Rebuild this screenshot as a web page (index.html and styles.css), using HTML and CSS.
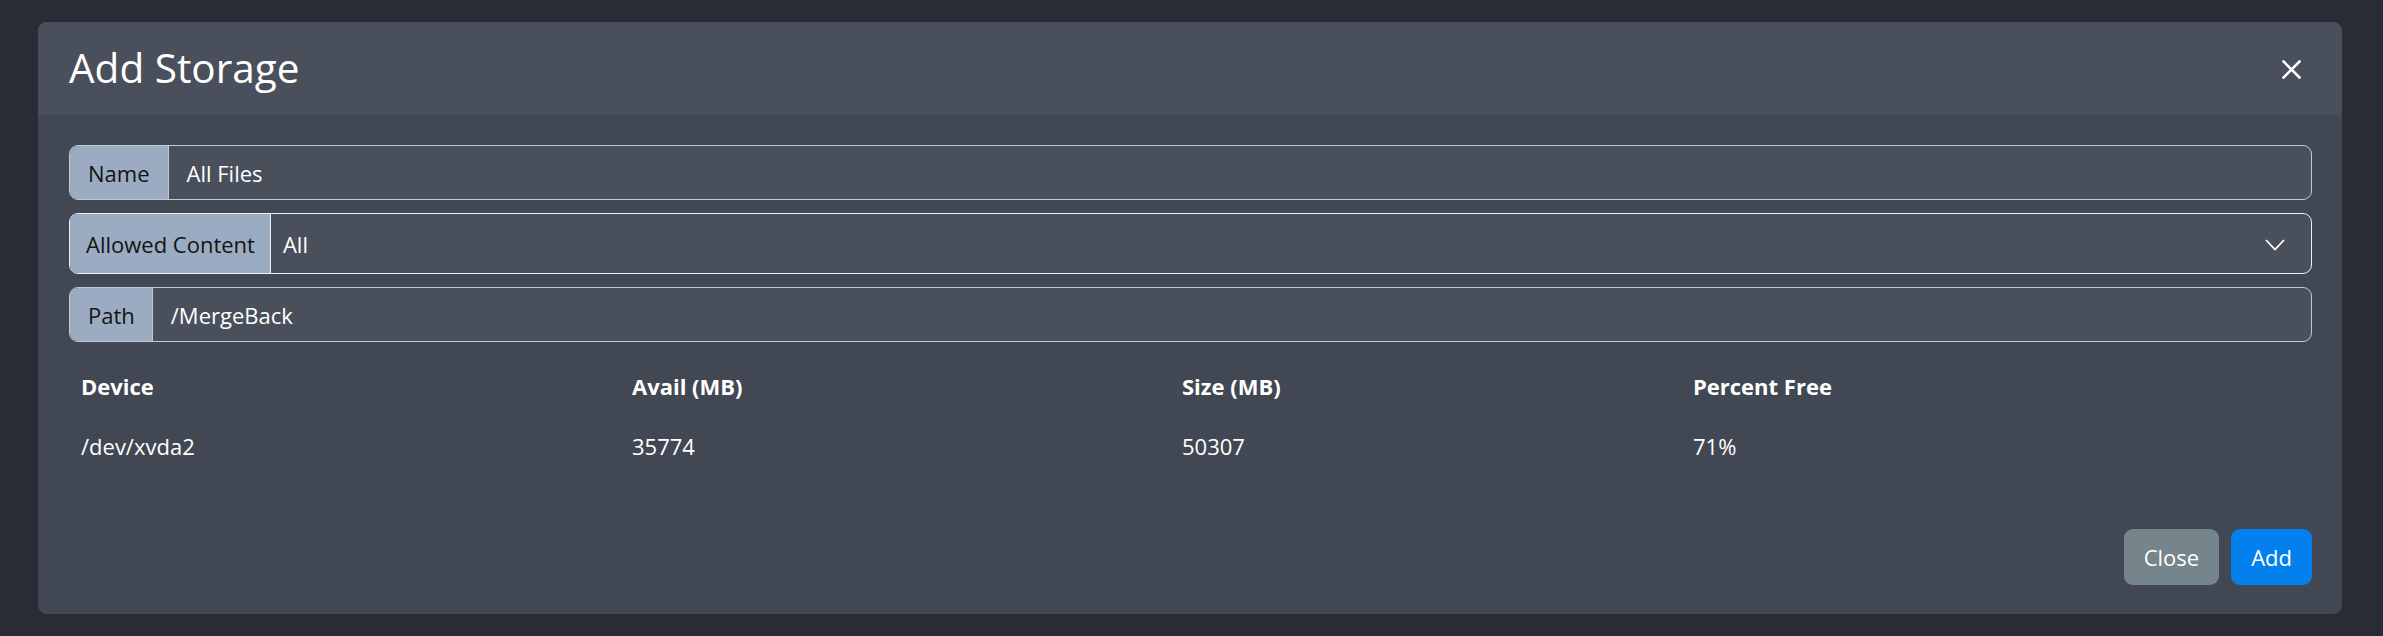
FILE: index.html
```html
<!DOCTYPE html>
<html lang="en">
<head>
<meta charset="utf-8">
<title>Add Storage</title>
<link rel="stylesheet" href="styles.css">
</head>
<body>
<div class="modal">
  <div class="modal-header">
    <h4 class="modal-title">Add Storage</h4>
    <button class="btn-close" aria-label="Close">
      <svg width="19" height="19" viewBox="0 0 19 19"><path d="M1.5 1.5 L17.5 17.5 M17.5 1.5 L1.5 17.5" stroke="#fff" stroke-width="2.6" stroke-linecap="square" fill="none"/></svg>
    </button>
  </div>
  <div class="modal-body">
    <div class="input-group">
      <span class="group-label label-name">Name</span>
      <span class="group-value value-name">All Files</span>
    </div>
    <div class="input-group select-group">
      <span class="group-label label-content">Allowed Content</span>
      <span class="group-value value-content">All</span>
      <svg class="chevron" width="20" height="12" viewBox="0 0 20 12"><path d="M1 1 L10 10.5 L19 1" stroke="#fff" stroke-width="1.8" fill="none"/></svg>
    </div>
    <div class="input-group">
      <span class="group-label label-path">Path</span>
      <span class="group-value value-path">/MergeBack</span>
    </div>
    <div class="table">
      <div class="row head">
        <div class="cell">Device</div>
        <div class="cell">Avail (MB)</div>
        <div class="cell">Size (MB)</div>
        <div class="cell">Percent Free</div>
      </div>
      <div class="row">
        <div class="cell">/dev/xvda2</div>
        <div class="cell">35774</div>
        <div class="cell">50307</div>
        <div class="cell">71%</div>
      </div>
    </div>
  </div>
  <div class="modal-footer">
    <button class="btn btn-secondary">Close</button>
    <button class="btn btn-primary">Add</button>
  </div>
</div>
</body>
</html>
```
FILE: styles.css
```css
* { box-sizing: border-box; }
html, body { margin: 0; padding: 0; }
body {
  background: #292c34;
  font-family: "Open Sans", "Noto Sans", sans-serif;
  font-size: 22px;
  color: #fff;
  padding: 22px 41px 0 38px;
  height: 636px;
  overflow: hidden;
}
.modal {
  width: 2304px;
  height: 592px;
  background: #414853;
  border-radius: 9px;
  overflow: hidden;
  display: flex;
  flex-direction: column;
}
.modal-header {
  height: 93px;
  flex: none;
  background: #4a505b;
  display: flex;
  align-items: center;
  justify-content: space-between;
  padding: 0 41px 0 31px;
}
.modal-title {
  margin: 0;
  font-weight: 400;
  font-size: 40.5px;
  line-height: 1;
  color: #fff;
}
.btn-close {
  border: 0;
  background: none;
  padding: 0;
  width: 19px;
  height: 19px;
  display: flex;
  margin-top: 2px;
}
.modal-body {
  flex: 1;
  padding: 30px 30px 0 31px;
  display: flex;
  flex-direction: column;
  gap: 13px;
}
.input-group {
  display: flex;
  align-items: stretch;
  height: 55px;
  border: 1px solid #c3c8cf;
  border-radius: 9px;
  background: #4a505b;
  overflow: hidden;
}
.select-group {
  height: 61px;
  border-color: #eceef1;
}
.group-label {
  display: flex;
  align-items: center;
  background: #9aabc2;
  color: #141414;
  border-right: 1px solid #c3c8cf;
  padding: 0 18px;
  font-size: 22px;
}
.label-content { padding: 0 15px 0 16px; border-right-color: #eceef1; }
.label-path { padding: 0 17px 0 18px; }
.group-value {
  display: flex;
  align-items: center;
  padding-left: 18px;
  color: #fff;
  font-size: 22px;
}
.value-content { padding-left: 12px; flex: 1; }
.chevron { align-self: center; margin-right: 26px; margin-top: 2px; }
.table {
  margin-top: 1px;
  display: flex;
  flex-direction: column;
}
.row {
  display: grid;
  grid-template-columns: 551px 550px 511px 1fr;
  height: 60px;
  align-items: center;
}
.cell { padding-left: 12px; font-size: 22px; color: #fff; }
.head .cell { font-weight: 700; }
.modal-footer {
  flex: none;
  display: flex;
  justify-content: flex-end;
  gap: 12px;
  padding: 0 30px 29px 0;
}
.btn {
  height: 56px;
  border: 0;
  border-radius: 9px;
  color: #fff;
  font-family: "Open Sans", "Noto Sans", sans-serif;
  font-size: 22px;
  padding: 0 20px;
}
.btn-secondary { background: #76858c; }
.btn-primary { background: #0280ee; padding: 0 20px; }
```
